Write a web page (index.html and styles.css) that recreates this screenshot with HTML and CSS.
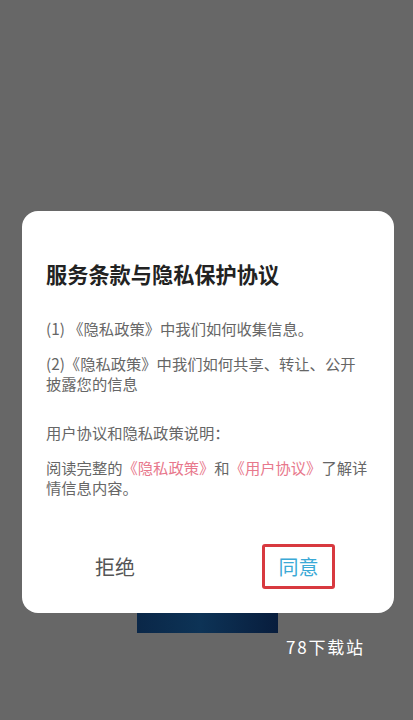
FILE: index.html
```html
<!DOCTYPE html>
<html lang="zh-CN">
<head>
<meta charset="utf-8">
<title>服务条款与隐私保护协议</title>
<link rel="stylesheet" href="styles.css">
</head>
<body>
<div class="screen">
  <div class="dialog">
    <h1 class="title">服务条款与隐私保护协议</h1>
    <p class="para gap-s">(1) 《隐私政策》中我们如何收集信息。</p>
    <p class="para gap-m">(2)《隐私政策》中我们如何共享、转让、公开<br>披露您的信息</p>
    <p class="para gap-l">用户协议和隐私政策说明：</p>
    <p class="para gap-m">阅读完整的<span class="link">《隐私政策》</span>和<span class="link">《用户协议》</span>了解详情信息内容。</p>
    <div class="actions">
      <div class="action"><span class="btn reject">拒绝</span></div>
      <div class="action"><span class="btn agree">同意</span></div>
    </div>
  </div>
  <div class="behind"></div>
  <div class="watermark">78下载站</div>
</div>
</body>
</html>
```
FILE: styles.css
```css
html, body {
  margin: 0;
  padding: 0;
  background: #676767;
}
body {
  font-family: "Noto Sans CJK SC", "Noto Sans", sans-serif;
  width: 413px;
  height: 720px;
  overflow: hidden;
}
.screen {
  display: flex;
  flex-direction: column;
  padding-top: 211px;
}
.dialog {
  margin-left: 22px;
  width: 372px;
  box-sizing: border-box;
  background: #ffffff;
  border-radius: 16px;
  padding: 48px 20px 24px 24px;
}
.title {
  margin: 0;
  font-size: 21.2px;
  line-height: 30px;
  font-weight: 700;
  color: #222222;
}
.para {
  margin: 0;
  font-size: 15.3px;
  line-height: 20px;
  color: #666666;
}
.gap-s { margin-top: 29px; }
.gap-m { margin-top: 15px; }
.gap-l { margin-top: 29px; }
.link { color: #e8788c; }
.actions {
  display: flex;
  margin: 47px -20px 0 -24px;
}
.action {
  flex: 1;
  display: flex;
  justify-content: center;
  align-items: center;
}
.btn {
  font-size: 20px;
  line-height: 39px;
  height: 39px;
}
.reject {
  color: #555555;
}
.agree {
  color: #3aa9d6;
  border: 3px solid #d8393f;
  border-radius: 3px;
  width: 67px;
  text-align: center;
  margin-right: 5px;
}
.behind {
  margin-left: 137px;
  width: 141px;
  height: 20px;
  background: linear-gradient(90deg, #0a2748 0%, #0d3356 45%, #081d3d 100%);
}
.watermark {
  margin-left: 286px;
  margin-top: 3px;
  color: #ffffff;
  font-size: 17px;
  line-height: 22px;
  letter-spacing: 1.8px;
}
```
